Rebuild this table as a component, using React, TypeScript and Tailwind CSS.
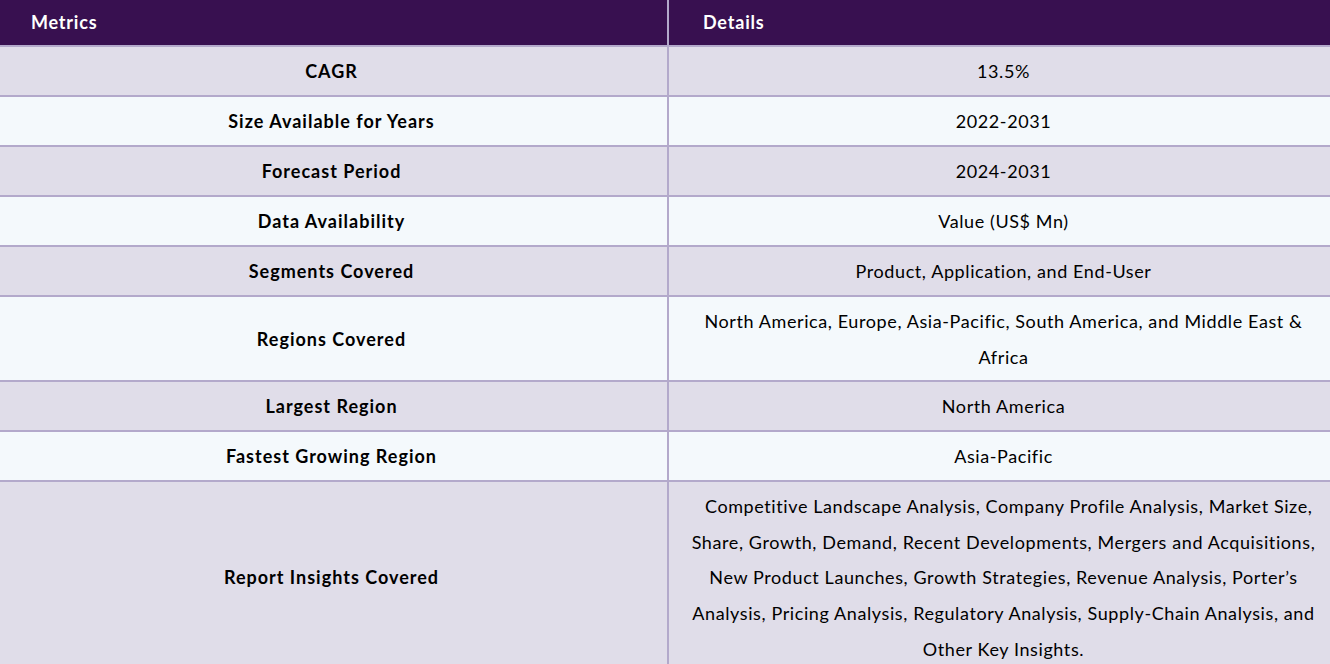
const rows: { metric: string; detail: React.ReactNode }[] = [
  { metric: "CAGR", detail: "13.5%" },
  { metric: "Size Available for Years", detail: "2022-2031" },
  { metric: "Forecast Period", detail: "2024-2031" },
  { metric: "Data Availability", detail: "Value (US$ Mn)" },
  { metric: "Segments Covered", detail: "Product, Application, and End-User" },
  {
    metric: "Regions Covered",
    detail: (
      <>
        North America, Europe, Asia-Pacific, South America, and Middle East &amp;
        <br />
        Africa
      </>
    ),
  },
  { metric: "Largest Region", detail: "North America" },
  { metric: "Fastest Growing Region", detail: "Asia-Pacific" },
  {
    metric: "Report Insights Covered",
    detail: (
      <>
        &nbsp;&nbsp;Competitive Landscape Analysis, Company Profile Analysis, Market Size,
        <br />
        Share, Growth, Demand, Recent Developments, Mergers and Acquisitions,
        <br />
        New Product Launches, Growth Strategies, Revenue Analysis, Porter’s
        <br />
        Analysis, Pricing Analysis, Regulatory Analysis, Supply-Chain Analysis, and
        <br />
        Other Key Insights.
      </>
    ),
  },
];

export default function App() {
  return (
    <main className="w-[1330px] h-[664px] overflow-hidden bg-white font-['Lato',sans-serif] text-[18px] text-black">
      <div className="grid grid-cols-[667px_1fr] bg-[#381050] text-white font-bold tracking-[0.8px] border-b-2 border-[#b3a9cb]">
        <div className="h-[45px] flex items-center pl-[31px]">Metrics</div>
        <div className="h-[45px] flex items-center pl-[34px] border-l-2 border-[#b3a9cb]">Details</div>
      </div>

      {rows.map((row, i) => (
        <div
          key={row.metric}
          className={
            "grid grid-cols-[667px_1fr] border-b-2 border-[#b3a9cb] " +
            (i % 2 === 0 ? "bg-[#e0dde9]" : "bg-[#f4f9fc]")
          }
        >
          <div className="min-h-[48px] flex items-center justify-center pl-[10px] pr-[14px] pt-[7px] pb-[5px] font-bold tracking-[1px] leading-[35.6px]">
            {row.metric}
          </div>
          <div className="min-h-[48px] flex items-center justify-center text-center pl-[18px] pr-[10px] pt-[7px] pb-[5px] tracking-[0.6px] leading-[35.6px] border-l-2 border-[#b3a9cb] whitespace-nowrap">
            <div>{row.detail}</div>
          </div>
        </div>
      ))}
    </main>
  );
}
